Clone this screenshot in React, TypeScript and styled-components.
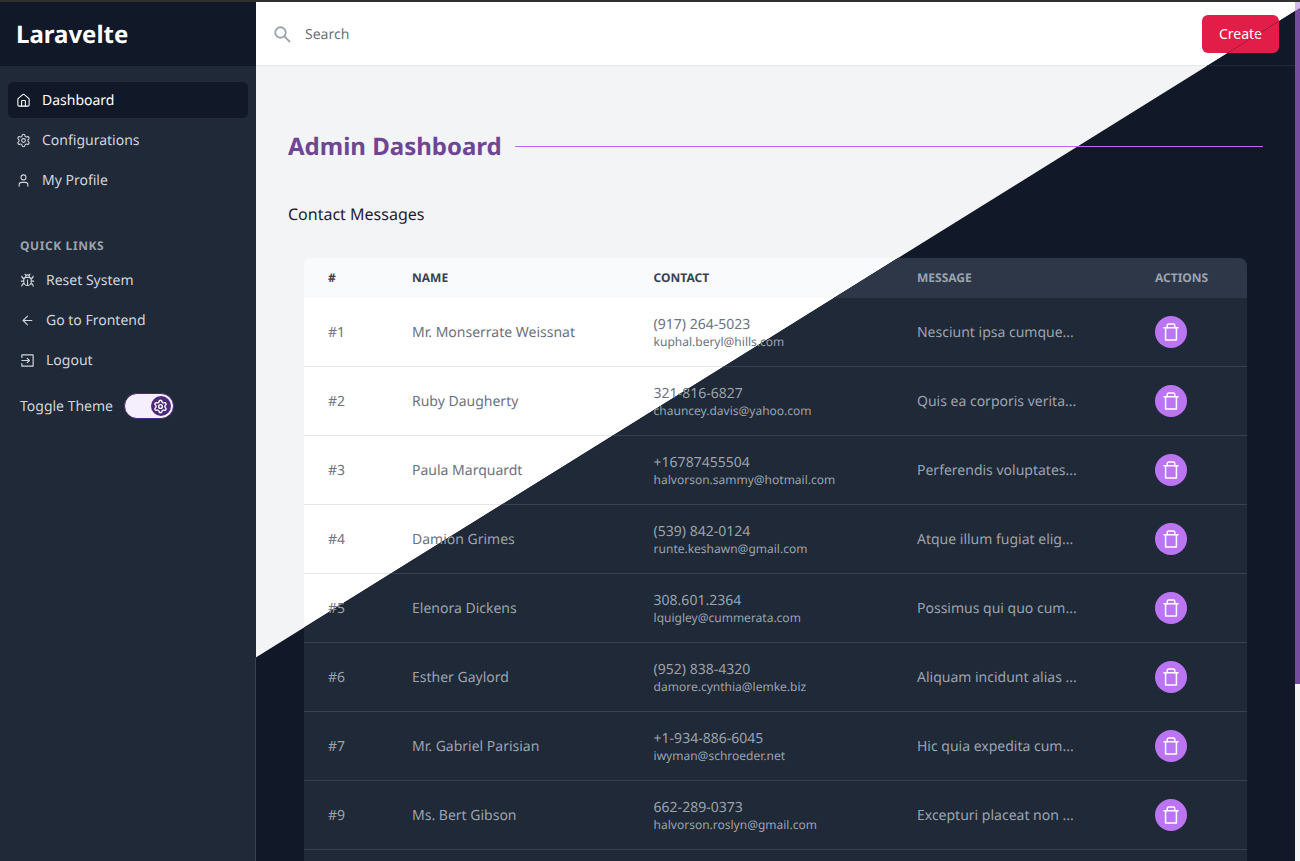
import { ReactNode } from "react"
import styled, { createGlobalStyle, ThemeProvider } from "styled-components"
import { ArrowLeft, Bug, House, Settings, User } from "lucide-react"

const lightTheme = {
  panel: "#f3f4f6",
  bar: "#ffffff",
  barBorder: "#e5e7eb",
  searchText: "#6b7280",
  title: "#6f4596",
  heading: "#1e1b33",
  tableHead: "#f9fafb",
  tableHeadText: "#374151",
  row: "#ffffff",
  rowBorder: "#e5e7eb",
  cell: "#6b7280",
  thumb: "#d3b8ec",
}

const darkTheme = {
  panel: "#111827",
  bar: "#111827",
  barBorder: "#1f2937",
  searchText: "#9ca3af",
  title: "#c084fc",
  heading: "#e5e7eb",
  tableHead: "#2d3748",
  tableHeadText: "#9ca3af",
  row: "#1f2937",
  rowBorder: "#374151",
  cell: "#9ca3af",
  thumb: "#754c9f",
}

const GlobalStyle = createGlobalStyle`
  html, body {
    margin: 0;
    height: 100%;
    overflow: hidden;
    font-family: "Noto Sans", sans-serif;
    font-size: 14px;
    text-rendering: geometricPrecision;
  }
  * { box-sizing: border-box; }
`

const Page = styled.div`
  height: 861px;
  display: flex;
  flex-direction: column;
  background: #2f2f2f;
`

const TopStrip = styled.div`
  height: 2px;
  flex-shrink: 0;
`

const Body = styled.div`
  position: relative;
  flex: 1;
  display: flex;
  min-height: 0;
`

const Sidebar = styled.aside`
  width: 256px;
  flex-shrink: 0;
  background: #1f2937;
  display: flex;
  flex-direction: column;
`

const Logo = styled.div`
  height: 64px;
  padding-left: 16px;
  display: flex;
  align-items: center;
  background: #111827;
  color: #fff;
  font-size: 24px;
  font-weight: 700;
`

const MainNav = styled.nav`
  padding: 16px 8px 0;
  display: flex;
  flex-direction: column;
  gap: 4px;
`

const MainLink = styled.a<{ $active?: boolean }>`
  height: 36px;
  padding-left: 8px;
  display: flex;
  align-items: center;
  gap: 11px;
  border-radius: 6px;
  background: ${p => (p.$active ? "#111827" : "transparent")};
  color: ${p => (p.$active ? "#ffffff" : "#d1d5db")};
  svg { width: 15px; height: 15px; flex-shrink: 0; }
`

const QuickTitle = styled.h3`
  margin: 39px 0 0;
  padding-left: 20px;
  height: 18px;
  line-height: 18px;
  color: #9ca3af;
  font-size: 12px;
  font-weight: 700;
  letter-spacing: 0.6px;
  text-transform: uppercase;
`

const QuickNav = styled.nav`
  padding: 7px 8px 0 20px;
  display: flex;
  flex-direction: column;
  gap: 4px;
`

const QuickLink = styled.a`
  height: 36px;
  display: flex;
  align-items: center;
  gap: 11px;
  color: #d1d5db;
  svg { width: 15px; height: 15px; flex-shrink: 0; }
`

const ToggleRow = styled.div`
  margin-top: 15px;
  padding-left: 20px;
  display: flex;
  align-items: center;
  gap: 11px;
  color: #d1d5db;
`

const ToggleTrack = styled.span`
  width: 50px;
  height: 26px;
  padding-right: 2px;
  flex-shrink: 0;
  display: flex;
  align-items: center;
  justify-content: flex-end;
  border-radius: 13px;
  border: 1px solid #4c2a75;
  background: #f5effd;
`

const ToggleKnob = styled.span`
  width: 20px;
  height: 20px;
  display: flex;
  align-items: center;
  justify-content: center;
  border-radius: 50%;
  background: #4c2a75;
  color: #fff;
  svg { width: 15px; height: 15px; }
`

const DarkReveal = styled.div`
  position: absolute;
  top: 0;
  right: 0;
  bottom: 0;
  left: 255px;
  display: flex;
  border-left: 1px solid #374151;
  clip-path: polygon(0 656px, 1045px 6px, 1045px 859px, 0 859px);
`

const Panel = styled.div`
  flex: 1;
  min-width: 0;
  display: flex;
  background: ${p => p.theme.panel};
  overflow: hidden;
`

const Content = styled.main`
  flex: 1;
  min-width: 0;
`

const ScrollRail = styled.div`
  width: 5px;
  flex-shrink: 0;
  background: #f3f3f3;
`

const ScrollThumb = styled.div`
  height: 682px;
  background: ${p => p.theme.thumb};
`

const TopBar = styled.header`
  height: 64px;
  padding: 0 16px 0 17px;
  display: flex;
  align-items: center;
  gap: 14px;
  background: ${p => p.theme.bar};
  border-bottom: 1px solid ${p => p.theme.barBorder};
`

const SearchIcon = styled.svg`
  width: 18px;
  height: 18px;
  flex-shrink: 0;
  color: #9ca3af;
`

const SearchLabel = styled.span`
  flex: 1;
  padding-top: 1px;
  color: ${p => p.theme.searchText};
`

const CreateButton = styled.button`
  width: 77px;
  height: 38px;
  border: 0;
  border-radius: 6px;
  background: #e11d48;
  color: #fff;
  font: inherit;
`

const Section = styled.div`
  padding: 64px 32px 0;
`

const TitleRow = styled.div`
  display: flex;
  align-items: center;
  gap: 13px;
`

const Title = styled.h1`
  margin: 0;
  color: ${p => p.theme.title};
  font-size: 24px;
  line-height: 34px;
  font-weight: 700;
`

const TitleRule = styled.span`
  flex: 1;
  height: 1px;
  margin-bottom: 2px;
  background: #b26cf6;
`

const SectionHeading = styled.h2`
  margin: 38px 0 0;
  color: ${p => p.theme.heading};
  font-size: 16px;
  line-height: 24px;
  font-weight: 400;
`

const Table = styled.div`
  margin: 32px 16px 0;
  min-height: 620px;
  border-radius: 8px 8px 0 0;
  background: ${p => p.theme.row};
  overflow: hidden;
`

const columns = "84px 241.6px 263.4px 238px 1fr"

const TableHead = styled.div`
  height: 40px;
  padding: 0 0 2px 24px;
  display: grid;
  grid-template-columns: ${columns};
  align-items: center;
  background: ${p => p.theme.tableHead};
  color: ${p => p.theme.tableHeadText};
  font-size: 12px;
  font-weight: 700;
  text-transform: uppercase;
`

const TableRow = styled.div`
  height: 69px;
  padding-left: 24px;
  display: grid;
  grid-template-columns: ${columns};
  align-items: center;
  border-bottom: 1px solid ${p => p.theme.rowBorder};
  color: ${p => p.theme.cell};
`

const ContactCell = styled.div`
  display: flex;
  flex-direction: column;
  padding-top: 1px;
`

const Phone = styled.span`
  line-height: 18px;
`

const Email = styled.span`
  font-size: 12px;
  line-height: 16px;
`

const DeleteButton = styled.button`
  width: 32px;
  height: 32px;
  padding: 0;
  display: flex;
  align-items: center;
  justify-content: center;
  border: 0;
  border-radius: 50%;
  background: #bb74f2;
  color: #fff;
  svg { width: 20px; height: 20px; }
`

const messages = [
  { id: 1, name: "Mr. Monserrate Weissnat", phone: "(917) 264-5023", email: "kuphal.beryl@hills.com", text: "Nesciunt ipsa cumque..." },
  { id: 2, name: "Ruby Daugherty", phone: "321-816-6827", email: "chauncey.davis@yahoo.com", text: "Quis ea corporis verita..." },
  { id: 3, name: "Paula Marquardt", phone: "+16787455504", email: "halvorson.sammy@hotmail.com", text: "Perferendis voluptates..." },
  { id: 4, name: "Damion Grimes", phone: "(539) 842-0124", email: "runte.keshawn@gmail.com", text: "Atque illum fugiat elig..." },
  { id: 5, name: "Elenora Dickens", phone: "308.601.2364", email: "lquigley@cummerata.com", text: "Possimus qui quo cum..." },
  { id: 6, name: "Esther Gaylord", phone: "(952) 838-4320", email: "damore.cynthia@lemke.biz", text: "Aliquam incidunt alias ..." },
  { id: 7, name: "Mr. Gabriel Parisian", phone: "+1-934-886-6045", email: "iwyman@schroeder.net", text: "Hic quia expedita cum..." },
  { id: 9, name: "Ms. Bert Gibson", phone: "662-289-0373", email: "halvorson.roslyn@gmail.com", text: "Excepturi placeat non ..." },
]

const LogoutIcon = () => (
  <svg viewBox="0 0 24 24" fill="none" stroke="currentColor" strokeWidth="1.9" strokeLinecap="round" strokeLinejoin="round">
    <path d="M3 7V3h18v18H3v-4" />
    <path d="M3 12h12M11.5 8.5L15 12l-3.5 3.5" />
  </svg>
)

const TrashIcon = () => (
  <svg viewBox="0 0 24 24" fill="none" stroke="currentColor" strokeWidth="1.8" strokeLinecap="round" strokeLinejoin="round">
    <path d="M3.5 7h17" />
    <path d="M7.5 7V4a1.5 1.5 0 0 1 1.5-1.5h6A1.5 1.5 0 0 1 16.5 4v3" />
    <path d="M5.5 7v14.5h13V7" />
  </svg>
)

const Frame = ({ children }: { children: ReactNode }) => <Panel>{children}</Panel>

const Workspace = () => (
  <Frame>
    <Content>
      <TopBar>
        <SearchIcon viewBox="0 0 24 24" fill="none" stroke="currentColor" strokeWidth="2.4" strokeLinecap="round">
          <circle cx="10" cy="10" r="7" />
          <path d="M15.5 15.5L22 22" />
        </SearchIcon>
        <SearchLabel>Search</SearchLabel>
        <CreateButton>Create</CreateButton>
      </TopBar>
      <Section>
        <TitleRow>
          <Title>Admin Dashboard</Title>
          <TitleRule />
        </TitleRow>
        <SectionHeading>Contact Messages</SectionHeading>
        <Table>
          <TableHead>
            <span>#</span>
            <span>Name</span>
            <span>Contact</span>
            <span>Message</span>
            <span>Actions</span>
          </TableHead>
          {messages.map(message => (
            <TableRow key={message.id}>
              <span>#{message.id}</span>
              <span>{message.name}</span>
              <ContactCell>
                <Phone>{message.phone}</Phone>
                <Email>{message.email}</Email>
              </ContactCell>
              <span>{message.text}</span>
              <DeleteButton aria-label="Delete">
                <TrashIcon />
              </DeleteButton>
            </TableRow>
          ))}
        </Table>
      </Section>
    </Content>
    <ScrollRail>
      <ScrollThumb />
    </ScrollRail>
  </Frame>
)

export default function App() {
  return (
    <Page>
      <GlobalStyle />
      <TopStrip />
      <Body>
        <Sidebar>
          <Logo>Laravelte</Logo>
          <MainNav>
            <MainLink $active><House strokeWidth={1.7} />Dashboard</MainLink>
            <MainLink><Settings strokeWidth={1.7} />Configurations</MainLink>
            <MainLink><User strokeWidth={1.7} />My Profile</MainLink>
          </MainNav>
          <QuickTitle>Quick Links</QuickTitle>
          <QuickNav>
            <QuickLink><Bug strokeWidth={1.7} />Reset System</QuickLink>
            <QuickLink><ArrowLeft strokeWidth={1.7} />Go to Frontend</QuickLink>
            <QuickLink><LogoutIcon />Logout</QuickLink>
          </QuickNav>
          <ToggleRow>
            Toggle Theme
            <ToggleTrack>
              <ToggleKnob><Settings strokeWidth={2.2} /></ToggleKnob>
            </ToggleTrack>
          </ToggleRow>
        </Sidebar>
        <ThemeProvider theme={lightTheme}>
          <Workspace />
        </ThemeProvider>
        <DarkReveal>
          <ThemeProvider theme={darkTheme}>
            <Workspace />
          </ThemeProvider>
        </DarkReveal>
      </Body>
    </Page>
  )
}
